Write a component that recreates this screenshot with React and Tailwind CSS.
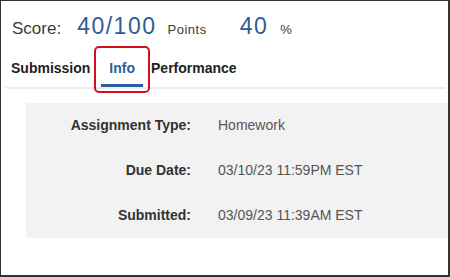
import React from "react";

const rows = [
    { label: "Assignment Type:", value: "Homework" },
    { label: "Due Date:", value: "03/10/23 11:59PM EST" },
    { label: "Submitted:", value: "03/09/23 11:39AM EST" },
];

const App = () => {
    return (
        <div className="w-[450px] h-[277px] bg-white border-l border-t border-r-2 border-b-2 border-[#333] font-['Liberation_Sans',Arial,sans-serif] overflow-hidden">
            {/* score line */}
            <div className="h-[48px] flex items-baseline pl-[11px] pt-[8px] text-[#3a3a3a]">
                <span className="text-[17px] leading-[30px]">Score:</span>
                <span className="ml-[16px] text-[23px] tracking-[1.5px] text-[#2d5d9a]">40/100</span>
                <span className="ml-[11px] text-[13px] tracking-[0.5px]">Points</span>
                <span className="ml-[33px] text-[23px] tracking-[1.5px] text-[#2d5d9a]">40</span>
                <span className="ml-[12px] text-[13px]">%</span>
            </div>

            {/* tabs */}
            <div className="mx-[2px] h-[40px] flex border-b-2 border-[#ececec] rounded-bl-md">
                <button className="px-2 h-[38px] text-[14px] font-bold text-[#222] flex items-center">
                    Submission
                </button>
                <button className="relative ml-[3px] px-2 h-[38px] text-[14px] font-bold text-[#2d5d9a] flex items-center">
                    Info
                    <span className="absolute left-0 right-0 bottom-0 h-[3px] bg-[#2d5d9a]" />
                    <span className="absolute -left-[7px] -right-[7px] -top-[3px] -bottom-[6px] border-2 border-[#d0101e] rounded-[5px]" />
                </button>
                <button className="px-2 h-[38px] text-[14px] font-bold text-[#222] flex items-center">
                    Performance
                </button>
            </div>

            {/* info panel */}
            <div className="mt-[14px] ml-[25px] bg-[#f2f2f2]">
                {rows.map((row) => (
                    <div key={row.label} className="h-[45px] flex items-center text-[14px]">
                        <span className="w-[165px] text-right font-bold text-[#333]">{row.label}</span>
                        <span className="ml-[27px] text-[#555]">{row.value}</span>
                    </div>
                ))}
            </div>
        </div>
    );
};

export default App;
